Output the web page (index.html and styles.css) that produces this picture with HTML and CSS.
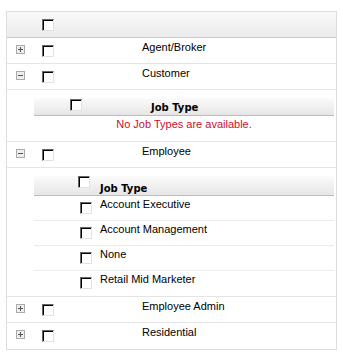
FILE: index.html
```html
<!DOCTYPE html>
<html lang="en">
<head>
    <meta charset="UTF-8">
    <title>Contact Types</title>
    <link rel="stylesheet" href="styles.css">
</head>
<body>
    <div class="grid">
        <table class="main">
            <colgroup>
                <col class="c-exp">
                <col class="c-chk">
                <col>
            </colgroup>
            <tr class="head">
                <td></td>
                <td class="chk"><span class="cb"></span></td>
                <td></td>
            </tr>

            <tr class="row">
                <td class="exp"><svg class="tog" width="9" height="9" viewBox="0 0 9 9"><rect x="0.5" y="0.5" width="8" height="8" fill="#eee" stroke="#aaa"/><path d="M2 4.5h5M4.5 2v5" stroke="#555"/></svg></td>
                <td class="chk"><span class="cb"></span></td>
                <td class="name">Agent/Broker</td>
            </tr>

            <tr class="row">
                <td class="exp"><svg class="tog" width="9" height="9" viewBox="0 0 9 9"><rect x="0.5" y="0.5" width="8" height="8" fill="#eee" stroke="#aaa"/><path d="M2 4.5h5" stroke="#555"/></svg></td>
                <td class="chk"><span class="cb"></span></td>
                <td class="name">Customer</td>
            </tr>
            <tr class="detail">
                <td colspan="3">
                    <table class="sub sub-empty">
                        <tr class="sub-head">
                            <td class="s-chk"><span class="cb"></span></td>
                            <td class="s-title">Job Type</td>
                        </tr>
                        <tr>
                            <td colspan="2" class="empty">No Job Types are available.</td>
                        </tr>
                    </table>
                </td>
            </tr>

            <tr class="row">
                <td class="exp"><svg class="tog" width="9" height="9" viewBox="0 0 9 9"><rect x="0.5" y="0.5" width="8" height="8" fill="#eee" stroke="#aaa"/><path d="M2 4.5h5" stroke="#555"/></svg></td>
                <td class="chk"><span class="cb"></span></td>
                <td class="name">Employee</td>
            </tr>
            <tr class="detail">
                <td colspan="3">
                    <table class="sub sub-list">
                        <tr class="sub-head">
                            <td class="s-chk"><span class="cb"></span></td>
                            <td class="s-title">Job Type</td>
                        </tr>
                        <tr class="item">
                            <td class="s-chk"><span class="cb"></span></td>
                            <td>Account Executive</td>
                        </tr>
                        <tr class="item">
                            <td class="s-chk"><span class="cb"></span></td>
                            <td>Account Management</td>
                        </tr>
                        <tr class="item">
                            <td class="s-chk"><span class="cb"></span></td>
                            <td>None</td>
                        </tr>
                        <tr class="item">
                            <td class="s-chk"><span class="cb"></span></td>
                            <td>Retail Mid Marketer</td>
                        </tr>
                    </table>
                </td>
            </tr>

            <tr class="row">
                <td class="exp"><svg class="tog" width="9" height="9" viewBox="0 0 9 9"><rect x="0.5" y="0.5" width="8" height="8" fill="#eee" stroke="#aaa"/><path d="M2 4.5h5M4.5 2v5" stroke="#555"/></svg></td>
                <td class="chk"><span class="cb"></span></td>
                <td class="name">Employee Admin</td>
            </tr>
            <tr class="row last">
                <td class="exp"><svg class="tog" width="9" height="9" viewBox="0 0 9 9"><rect x="0.5" y="0.5" width="8" height="8" fill="#eee" stroke="#aaa"/><path d="M2 4.5h5M4.5 2v5" stroke="#555"/></svg></td>
                <td class="chk"><span class="cb"></span></td>
                <td class="name">Residential</td>
            </tr>
        </table>
    </div>
</body>
</html>
```

FILE: styles.css
```css
body {
    margin: 11px 0 0 6px;
    font-family: "Liberation Sans", Arial, sans-serif;
    font-size: 11px;
    line-height: 13px;
    color: #000;
    background: #fff;
}
.grid {
    width: 329px;
    border: 1px solid #dedede;
}
table {
    border-collapse: collapse;
    border-spacing: 0;
}
td {
    padding: 0;
    vertical-align: top;
    box-sizing: border-box;
}
.main {
    width: 100%;
    table-layout: fixed;
}
.c-exp {
    width: 27px;
}
.c-chk {
    width: 108px;
}
.head td {
    height: 25px;
    background: linear-gradient(#f9f9f9, #ebebeb);
    border-bottom: 1px solid #c9c9c9;
}
.head .chk {
    padding-top: 7px;
}
.row td {
    height: 26px;
    border-bottom: 1px solid #e4e4e4;
}
.row.last td {
    border-bottom: none;
}
.exp {
    padding-left: 9px;
}
.tog {
    display: block;
    margin-top: 7px;
}
.chk {
    padding-left: 8px;
}
.row .chk .cb {
    margin-top: 7px;
}
.name {
    padding-top: 3px;
}
.cb {
    display: block;
    width: 12px;
    height: 12px;
    box-sizing: border-box;
    background: #fff;
    border-top: 1px solid #666;
    border-left: 1px solid #666;
    border-right: 1px solid #e2e2e2;
    border-bottom: 1px solid #e2e2e2;
    box-shadow: inset 1px 1px 0 #000;
}
.detail > td {
    border-bottom: 1px solid #e4e4e4;
}
.sub {
    margin-left: 27px;
    width: 300px;
}
.sub-head td {
    height: 18px;
    background: linear-gradient(#fbfbfb, #e6e6e6);
    border-bottom: 1px solid #bdbdbd;
}
.s-title {
    font-family: "DejaVu Sans", Verdana, sans-serif;
    font-weight: bold;
    font-size: 10px;
}
.sub-empty {
    margin-top: 8px;
    margin-bottom: 6px;
}
.sub-empty .s-chk {
    width: 48px;
    padding-left: 36px;
}
.sub-empty .s-chk .cb {
    margin-top: 1px;
}
.sub-empty .s-title {
    padding-left: 69px;
    padding-top: 3px;
}
.empty {
    height: 19px;
    padding-top: 2px;
    text-align: center;
    color: #c8102e;
}
.sub-list {
    margin-top: 8px;
    margin-bottom: 1px;
}
.sub-list .s-chk {
    width: 66px;
    padding-left: 44px;
}
.sub-list .s-title {
    padding-top: 6px;
}
.item td {
    height: 25px;
    padding-top: 2px;
    border-bottom: 1px solid #ececec;
}
.item .cb {
    margin: 4px 0 0 2px;
}
.item:last-child td {
    border-bottom: none;
}
```
